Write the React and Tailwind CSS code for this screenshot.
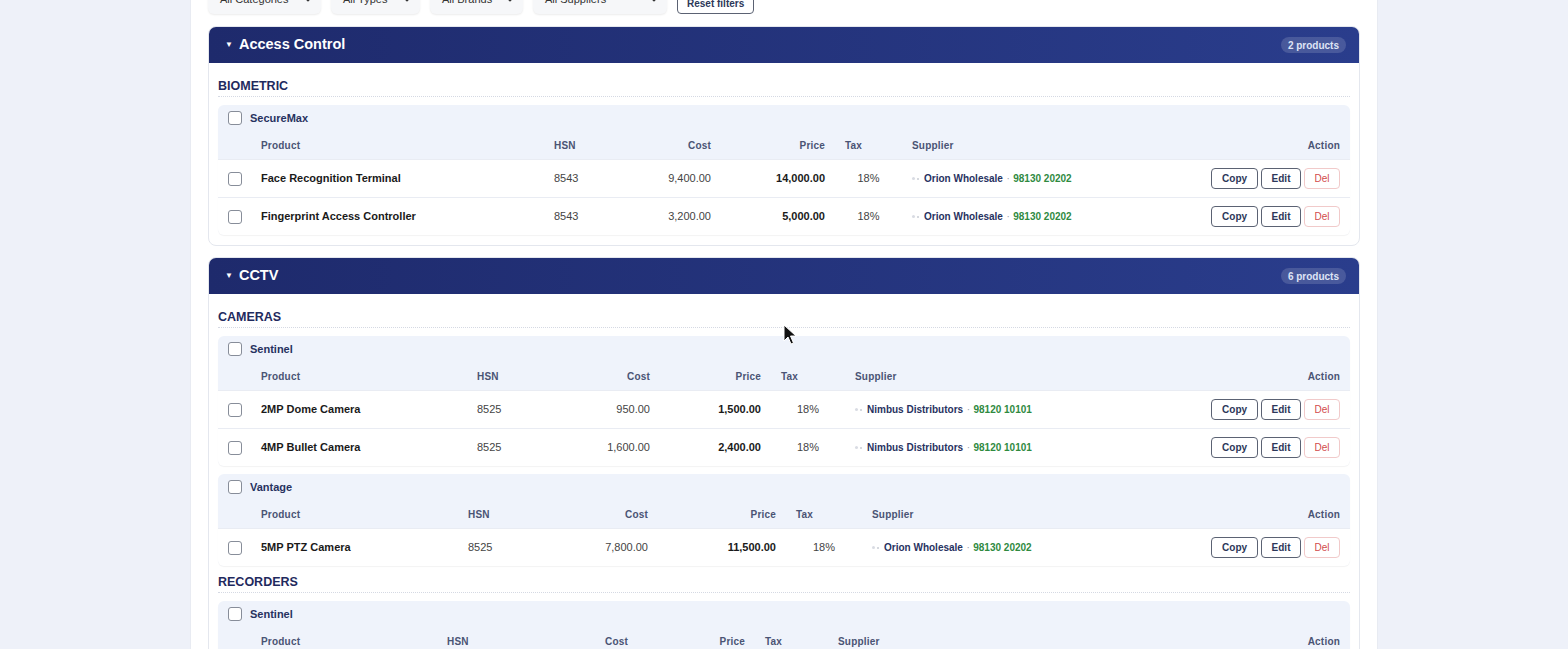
import React from 'react';
import { ChevronDown } from 'lucide-react';

const sections = [
  {
    name: 'Access Control',
    count: '2 products',
    categories: [
      {
        name: 'BIOMETRIC',
        brands: [
          {
            name: 'SecureMax',
            cols: 'grid-cols-[33px_293px_86px_91px_114px_67px_1fr_146px]',
            products: [
              { name: 'Face Recognition Terminal', hsn: '8543', cost: '9,400.00', price: '14,000.00', tax: '18%', supplier: 'Orion Wholesale', phone: '98130 20202' },
              { name: 'Fingerprint Access Controller', hsn: '8543', cost: '3,200.00', price: '5,000.00', tax: '18%', supplier: 'Orion Wholesale', phone: '98130 20202' },
            ],
          },
        ],
      },
    ],
  },
  {
    name: 'CCTV',
    count: '6 products',
    categories: [
      {
        name: 'CAMERAS',
        brands: [
          {
            name: 'Sentinel',
            cols: 'grid-cols-[33px_216px_93px_100px_111px_74px_1fr_146px]',
            products: [
              { name: '2MP Dome Camera', hsn: '8525', cost: '950.00', price: '1,500.00', tax: '18%', supplier: 'Nimbus Distributors', phone: '98120 10101' },
              { name: '4MP Bullet Camera', hsn: '8525', cost: '1,600.00', price: '2,400.00', tax: '18%', supplier: 'Nimbus Distributors', phone: '98120 10101' },
            ],
          },
          {
            name: 'Vantage',
            cols: 'grid-cols-[33px_207px_100px_100px_128px_76px_1fr_146px]',
            products: [
              { name: '5MP PTZ Camera', hsn: '8525', cost: '7,800.00', price: '11,500.00', tax: '18%', supplier: 'Orion Wholesale', phone: '98130 20202' },
            ],
          },
        ],
      },
      {
        name: 'RECORDERS',
        brands: [
          {
            name: 'Sentinel',
            cols: 'grid-cols-[33px_186px_101px_100px_117px_73px_1fr_146px]',
            products: [
              { name: '8CH Network Video Recorder', hsn: '8521', cost: '6,200.00', price: '9,000.00', tax: '18%', supplier: 'Nimbus Distributors', phone: '98120 10101' },
              { name: '16CH Network Video Recorder', hsn: '8521', cost: '9,800.00', price: '14,500.00', tax: '18%', supplier: 'Nimbus Distributors', phone: '98120 10101' },
            ],
          },
        ],
      },
    ],
  },
];

const filters = [
  { label: 'All Categories', width: 'w-[113px]' },
  { label: 'All Types', width: 'w-[89px]' },
  { label: 'All Brands', width: 'w-[93px]' },
  { label: 'All Suppliers', width: 'w-[134px]' },
];

function Checkbox() {
  return <span className="block w-[14px] h-[14px] rounded-[3px] border border-[#878d99] bg-white" />;
}

function BrandTable({ brand }) {
  return (
    <div className="rounded-md bg-[#eff3fb] overflow-hidden shadow-[0_1px_1px_rgba(0,0,0,0.05)]">
      <div className="flex items-center gap-2 h-[26px] pl-2.5">
        <Checkbox />
        <span className="text-[11px] font-bold text-[#27325f]">{brand.name}</span>
      </div>
      <div className={`grid ${brand.cols} items-center h-[28px] text-[10px] font-bold text-[#4a5474] tracking-[0.02em]`}>
        <span />
        <span className="px-2.5">Product</span>
        <span className="px-2.5">HSN</span>
        <span className="px-2.5 text-right">Cost</span>
        <span className="px-2.5 text-right">Price</span>
        <span className="px-2.5">Tax</span>
        <span className="px-2.5">Supplier</span>
        <span className="px-2.5 text-right">Action</span>
      </div>
      {brand.products.map((p, i) => (
        <div
          key={i}
          className={`grid ${brand.cols} items-center h-[38px] bg-white border-t border-[#e9ecf3] text-[11px] text-[#444]`}
        >
          <span className="pl-2.5">
            <Checkbox />
          </span>
          <span className="px-2.5 font-bold text-[#1a1a1a]">{p.name}</span>
          <span className="px-2.5">{p.hsn}</span>
          <span className="px-2.5 text-right">{p.cost}</span>
          <span className="px-2.5 text-right font-bold text-[#1a1a1a]">{p.price}</span>
          <span className="px-2.5 text-center text-[#444]">{p.tax}</span>
          <span className="px-2.5 flex items-center text-[10px]">
            <span className="flex items-center gap-[2px] mr-[5px]">
              <span className="block w-[3px] h-[3px] rounded-full bg-[#d9dce3]" />
              <span className="block w-[2px] h-[2px] rounded-full bg-[#c9ccd4]" />
            </span>
            <span className="font-bold text-[#27325f]">{p.supplier}</span>
            <span className="mx-[3.5px] text-[#9aa0ab]">·</span>
            <span className="font-bold text-[#2f8a3f]">{p.phone}</span>
          </span>
          <span className="pr-2.5 flex justify-end gap-[3px] text-[10px]">
            <button className="h-[21px] px-[10px] rounded border border-[#5b6273] bg-white font-bold text-[#2d3759]">Copy</button>
            <button className="h-[21px] px-[9.5px] rounded border border-[#5b6273] bg-white font-bold text-[#2d3759]">Edit</button>
            <button className="h-[21px] px-[9.5px] rounded border border-[#f1caca] bg-white text-[#d24b4b]">Del</button>
          </span>
        </div>
      ))}
    </div>
  );
}

function Section({ section }) {
  return (
    <div className="rounded-lg border border-[#e4e7ee] bg-white overflow-hidden">
      <div className="flex items-center justify-between h-[36px] pl-4 pr-[13px] bg-gradient-to-r from-[#1e2a6c] to-[#2a3d8c]">
        <div className="flex items-center gap-[6px] text-white">
          <span className="text-[8px] leading-none">▼</span>
          <span className="text-[14.5px] font-bold">{section.name}</span>
        </div>
        <span className="rounded-full bg-white/15 px-[7px] h-[16px] flex items-center text-[10px] font-bold text-[#dfe4f5]">
          {section.count}
        </span>
      </div>
      <div className="px-[9px] pt-[15px] pb-2.5">
        {section.categories.map((cat, ci) => (
          <div key={ci} className={ci > 0 ? 'mt-2' : ''}>
            <div className="text-[12.5px] leading-[16px] font-bold text-[#1f2a5e] pb-[2px] border-b border-dotted border-[#d5d9e3] mb-2">
              {cat.name}
            </div>
            <div className="flex flex-col gap-2">
              {cat.brands.map((b, bi) => (
                <BrandTable key={bi} brand={b} />
              ))}
            </div>
          </div>
        ))}
      </div>
    </div>
  );
}

export default function App() {
  return (
    <div className="min-h-screen bg-[#eef1f9] flow-root font-['Liberation_Sans',Arial,sans-serif]">
      <div className="w-[1186px] mx-auto -mt-[16px] bg-white px-[17px] pb-8 shadow-[0_0_0_1px_#e8ebf2]">
        <div className="flex items-end gap-2.5 mb-3">
          {filters.map((f) => (
            <div
              key={f.label}
              className={`${f.width} h-[30px] flex items-center justify-between pl-3 pr-[6px] rounded-md bg-[#f6f7f9] shadow-[0_1px_2px_rgba(0,0,0,0.08)] text-[11px] text-[#333]`}
            >
              <span>{f.label}</span>
              <ChevronDown size={14} strokeWidth={2.5} className="text-[#333]" />
            </div>
          ))}
          <button className="h-[21px] px-[9px] rounded border border-[#5b6273] bg-white text-[10px] font-bold text-[#2d3759]">
            Reset filters
          </button>
        </div>
        <div className="flex flex-col gap-[11px]">
          {sections.map((s) => (
            <Section key={s.name} section={s} />
          ))}
        </div>
      </div>
      <svg className="fixed left-[783px] top-[324px]" width="14" height="22" viewBox="0 0 14 22">
        <path d="M1 1 L1 17 L5 13 L8 20 L10.5 19 L7.5 12 L13 12 Z" fill="#111" stroke="#fff" strokeWidth="1" />
      </svg>
    </div>
  );
}
